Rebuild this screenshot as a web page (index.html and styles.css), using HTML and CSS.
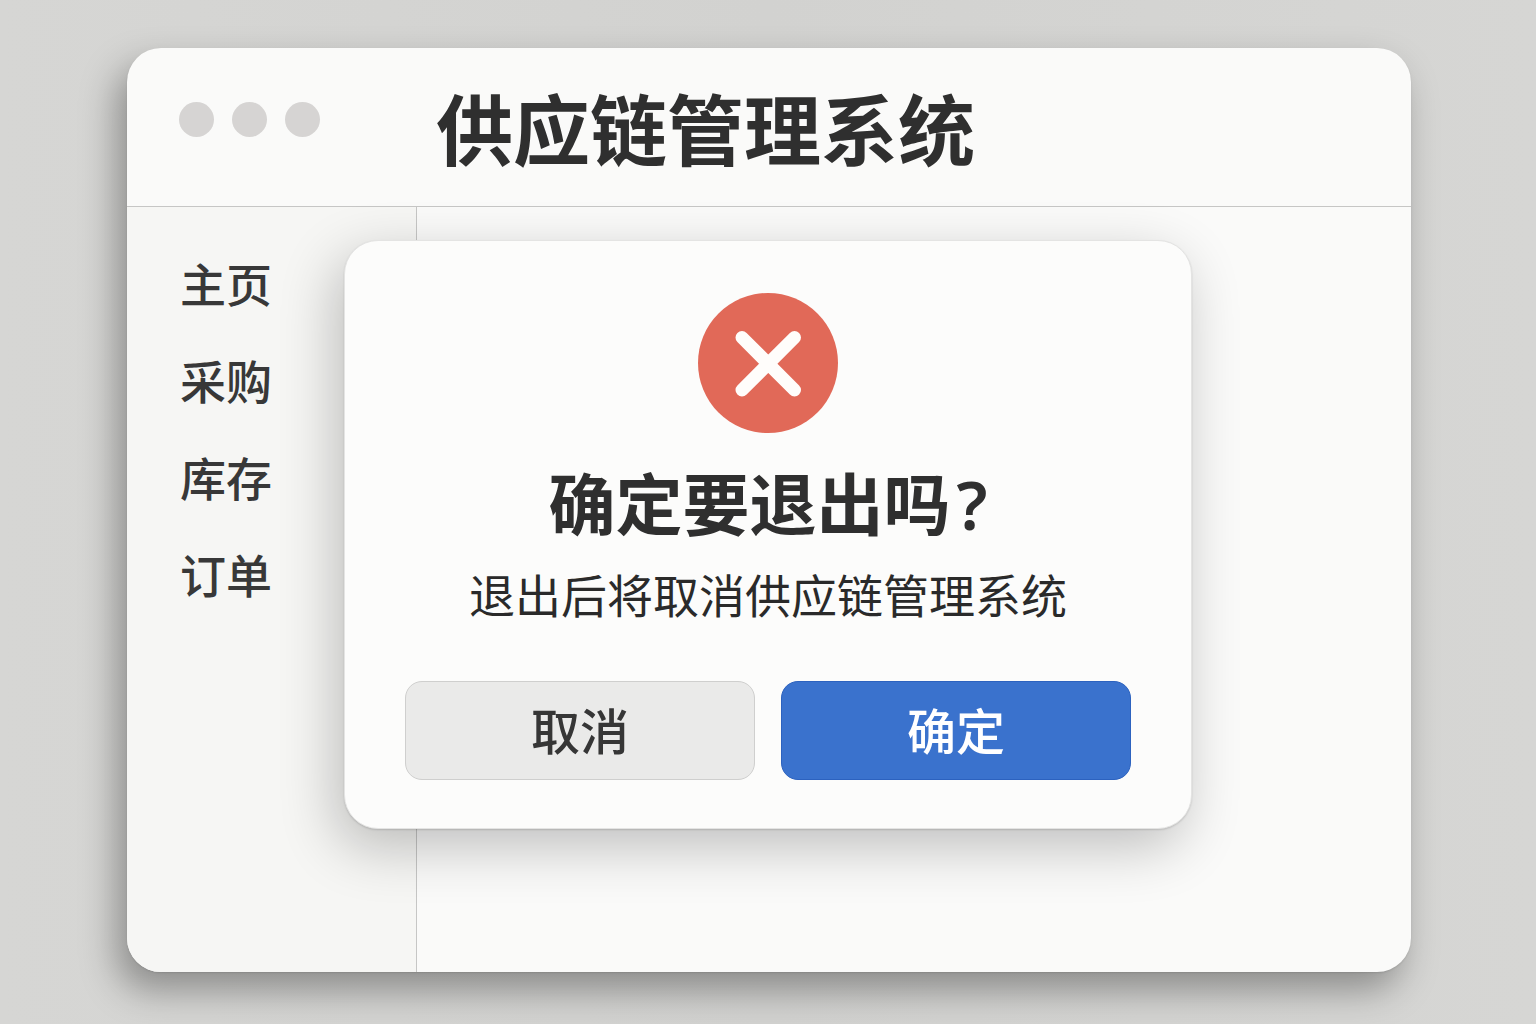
FILE: index.html
```html
<!DOCTYPE html>
<html lang="zh-CN">
<head>
<meta charset="utf-8">
<meta name="viewport" content="width=device-width, initial-scale=1">
<title>供应链管理系统</title>
<link rel="stylesheet" href="styles.css">
</head>
<body>
<div class="window">
  <header class="titlebar">
    <div class="lights" aria-hidden="true"><span class="light"></span><span class="light"></span><span class="light"></span></div>
    <h1 class="title">供应链管理系统</h1>
  </header>
  <div class="body">
    <nav class="sidebar">
      <a class="nav-link" href="#home">主页</a>
      <a class="nav-link" href="#purchase">采购</a>
      <a class="nav-link" href="#stock">库存</a>
      <a class="nav-link" href="#orders">订单</a>
    </nav>
    <main class="content"></main>
  </div>
</div>
<div class="overlay">
  <section class="dialog" role="alertdialog" aria-labelledby="dialog-title" aria-describedby="dialog-text">
    <svg class="dialog-icon" viewBox="0 0 140 140" aria-hidden="true">
      <circle cx="70" cy="70" r="70" fill="#e16958"/>
      <path d="M44 44.500L96.500 97M96.500 44.500L44 97" stroke="#fffdfb" stroke-width="13" stroke-linecap="round"/>
    </svg>
    <h2 class="dialog-title" id="dialog-title">确定要退出吗<span class="mark">?</span></h2>
    <p class="dialog-text" id="dialog-text">退出后将取消供应链管理系统</p>
    <div class="actions">
      <button class="button button-cancel" type="button">取消</button>
      <button class="button button-confirm" type="button">确定</button>
    </div>
  </section>
</div>
</body>
</html>
```
FILE: styles.css
```css
* {
  box-sizing: border-box;
}

body {
  margin: 0;
  min-height: 100vh;
  padding: 48px 125px 52px 127px;
  display: flex;
  background: linear-gradient(90deg, #d6d6d4, #d2d2d0 50%, #d6d6d4);
  color: #2f2f2f;
  font-family: "Noto Sans CJK SC", "Noto Sans", sans-serif;
}

.window {
  flex: 1;
  display: flex;
  flex-direction: column;
  overflow: hidden;
  border-radius: 34px;
  background: #fafaf9;
  box-shadow: -10px 18px 36px rgba(0, 0, 0, 0.34), 0 1px 2px rgba(0, 0, 0, 0.1);
}

.titlebar {
  display: flex;
  align-items: center;
  gap: 116px;
  height: 159px;
  padding: 0 52px;
  border-bottom: 1px solid #c6c6c5;
}

.lights {
  display: flex;
  gap: 18px;
  padding-bottom: 16px;
}

.light {
  width: 35px;
  height: 35px;
  border-radius: 50%;
  background: #d6d4d3;
}

.title {
  margin: 0;
  font-size: 77px;
  line-height: 96px;
  font-weight: 700;
}

.body {
  flex: 1;
  display: flex;
}

.sidebar {
  width: 290px;
  padding: 43px 53px;
  display: flex;
  flex-direction: column;
  gap: 33px;
  border-right: 1px solid #c6c6c5;
  background: #f6f6f4;
}

.nav-link {
  color: #383838;
  font-size: 46px;
  line-height: 64px;
  font-weight: 500;
  text-decoration: none;
}

.content {
  flex: 1;
}

.overlay {
  position: absolute;
  inset: 0;
  padding-top: 45px;
  display: flex;
  align-items: center;
  justify-content: center;
}

.dialog {
  width: 848px;
  padding: 52px 60px 48px;
  display: flex;
  flex-direction: column;
  align-items: center;
  border: 1px solid #e4e4e3;
  border-radius: 34px;
  background: #fcfcfb;
  box-shadow: -8px 18px 56px rgba(0, 0, 0, 0.24), 0 1px 2px rgba(0, 0, 0, 0.14);
}

.dialog-icon {
  width: 140px;
  height: 140px;
}

.dialog-title {
  margin: 20px 0 0;
  font-size: 67px;
  line-height: 96px;
  font-weight: 700;
}

.mark {
  padding-left: 6px;
  font-family: "Noto Sans", sans-serif;
  font-weight: 600;
  line-height: 1;
}

.dialog-text {
  margin: 12px 0 0;
  color: #2a2a2a;
  font-size: 46px;
  line-height: 64px;
  font-weight: 400;
}

.actions {
  align-self: stretch;
  margin-top: 56px;
  display: flex;
  gap: 26px;
}

.button {
  flex: 1;
  height: 99px;
  padding: 0 0 4px;
  border: 1px solid #cfcfce;
  border-radius: 17px;
  background: #eaeae9;
  color: #363636;
  font-family: inherit;
  font-size: 49px;
  line-height: 64px;
  font-weight: 500;
}

.button-confirm {
  border-color: #2c62bf;
  background: #3a72cd;
  color: #ffffff;
}
```
